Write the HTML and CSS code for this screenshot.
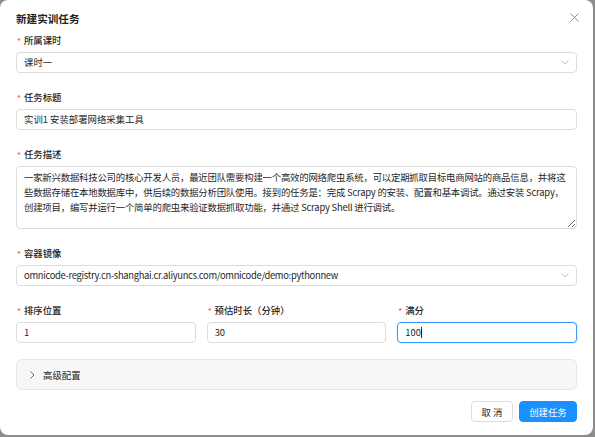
FILE: index.html
```html
<!DOCTYPE html>
<html lang="zh-CN">
<head>
<meta charset="utf-8">
<title>新建实训任务</title>
<link rel="stylesheet" href="styles.css">
</head>
<body>
<div class="modal">
  <div class="header">
    <div class="title">新建实训任务</div>
    <svg class="close" width="9" height="9" viewBox="0 0 9 9"><path d="M0.5 0.5 L8.5 8.5 M8.5 0.5 L0.5 8.5" stroke="#8c8c8c" stroke-width="1" fill="none"/></svg>
  </div>

  <div class="item">
    <div class="label"><span class="req">*</span>所属课时</div>
    <div class="input select"><span>课时一</span>
      <svg class="chev" width="8" height="5" viewBox="0 0 8 5"><path d="M0.5 0.5 L4 4 L7.5 0.5" stroke="#bfbfbf" stroke-width="1" fill="none"/></svg>
    </div>
  </div>

  <div class="item">
    <div class="label"><span class="req">*</span>任务标题</div>
    <div class="input">实训1 安装部署网络采集工具</div>
  </div>

  <div class="item">
    <div class="label"><span class="req">*</span>任务描述</div>
    <textarea class="textarea">一家新兴数据科技公司的核心开发人员，最近团队需要构建一个高效的网络爬虫系统，可以定期抓取目标电商网站的商品信息，并将这些数据存储在本地数据库中，供后续的数据分析团队使用。接到的任务是：完成 Scrapy 的安装、配置和基本调试。通过安装 Scrapy，创建项目，编写并运行一个简单的爬虫来验证数据抓取功能，并通过 Scrapy Shell 进行调试。</textarea>
  </div>

  <div class="item">
    <div class="label"><span class="req">*</span>容器镜像</div>
    <div class="input select"><span class="latin">omnicode-registry.cn-shanghai.cr.aliyuncs.com/omnicode/demo:pythonnew</span>
      <svg class="chev" width="8" height="5" viewBox="0 0 8 5"><path d="M0.5 0.5 L4 4 L7.5 0.5" stroke="#bfbfbf" stroke-width="1" fill="none"/></svg>
    </div>
  </div>

  <div class="row item">
    <div>
      <div class="label"><span class="req">*</span>排序位置</div>
      <div class="input">1</div>
    </div>
    <div>
      <div class="label"><span class="req">*</span>预估时长（分钟）</div>
      <div class="input">30</div>
    </div>
    <div>
      <div class="label"><span class="req">*</span>满分</div>
      <div class="input focus">100<span class="caret"></span></div>
    </div>
  </div>

  <div class="collapse">
    <svg class="arrow" width="5" height="8" viewBox="0 0 5 8"><path d="M0.5 0.5 L4 4 L0.5 7.5" stroke="#555" stroke-width="0.9" fill="none"/></svg>
    <span>高级配置</span>
  </div>

  <div class="footer">
    <button class="btn">取 消</button>
    <button class="btn primary">创建任务</button>
  </div>
</div>
</body>
</html>
```

FILE: styles.css
```css
html, body {
  margin: 0;
  padding: 0;
  background: #8c8c8c;
  width: 595px;
  height: 437px;
  overflow: hidden;
}

body {
  font-family: "Noto Sans CJK SC", "Noto Sans", sans-serif;
  font-size: 9.4px;
  color: #262626;
}

.modal {
  width: 593px;
  height: 435px;
  box-sizing: border-box;
  background: #fff;
  border-radius: 8px;
  padding: 11px 16px 0 16px;
}

.header {
  display: flex;
  justify-content: space-between;
  align-items: center;
  height: 16px;
  margin-bottom: 6px;
}

.title {
  font-size: 10.6px;
  font-weight: 700;
  color: #1f1f1f;
  line-height: 16px;
}

.close {
  margin-right: -2px;
  margin-top: -4px;
}

.item {
  margin-bottom: 17px;
}

.label {
  line-height: 15px;
  padding-bottom: 4px;
  font-weight: 500;
  color: #262626;
}

.req {
  color: #ff4d4f;
  margin-right: 3px;
  margin-left: 1px;
  font-size: 8px;
}

.input {
  height: 21px;
  box-sizing: border-box;
  border: 1px solid #dcdcdc;
  border-radius: 4px;
  padding: 0 7px;
  line-height: 19px;
  color: #262626;
  background: #fff;
  display: flex;
  align-items: center;
  white-space: nowrap;
}

.select {
  justify-content: space-between;
}

.latin {
  letter-spacing: -0.3px;
}

.chev {
  flex: none;
}

.focus {
  border-color: #4096ff;
  box-shadow: 0 0 0 1px rgba(5, 145, 255, 0.1);
}

.caret {
  display: inline-block;
  width: 1px;
  height: 11px;
  background: #262626;
}

.textarea {
  display: block;
  width: 100%;
  height: 63px;
  box-sizing: border-box;
  border: 1px solid #dcdcdc;
  border-radius: 4px;
  padding: 3px 6px 3px 7px;
  font-family: inherit;
  font-size: 9.4px;
  letter-spacing: -0.2px;
  line-height: 15px;
  color: #262626;
  resize: vertical;
  margin: 0;
  outline: none;
  overflow: hidden;
}

.row {
  display: grid;
  grid-template-columns: 1fr 1fr 1fr;
  gap: 11px;
  margin-bottom: 16px;
}

.collapse {
  height: 31px;
  box-sizing: border-box;
  border: 1px solid #e6e6e6;
  border-radius: 6px;
  background: #f7f7f7;
  display: flex;
  align-items: center;
  padding-left: 13px;
  color: #262626;
}

.arrow {
  margin-right: 8px;
}

.footer {
  display: flex;
  justify-content: flex-end;
  gap: 6px;
  margin-top: 11px;
}

.btn {
  height: 21px;
  box-sizing: border-box;
  border: 1px solid #dcdcdc;
  border-radius: 4px;
  background: #fff;
  font-family: inherit;
  font-size: 9.4px;
  color: #262626;
  padding: 0;
  width: 42px;
  cursor: pointer;
}

.primary {
  width: 58px;
  background: #1890ff;
  border-color: #1890ff;
  color: #fff;
}
```
